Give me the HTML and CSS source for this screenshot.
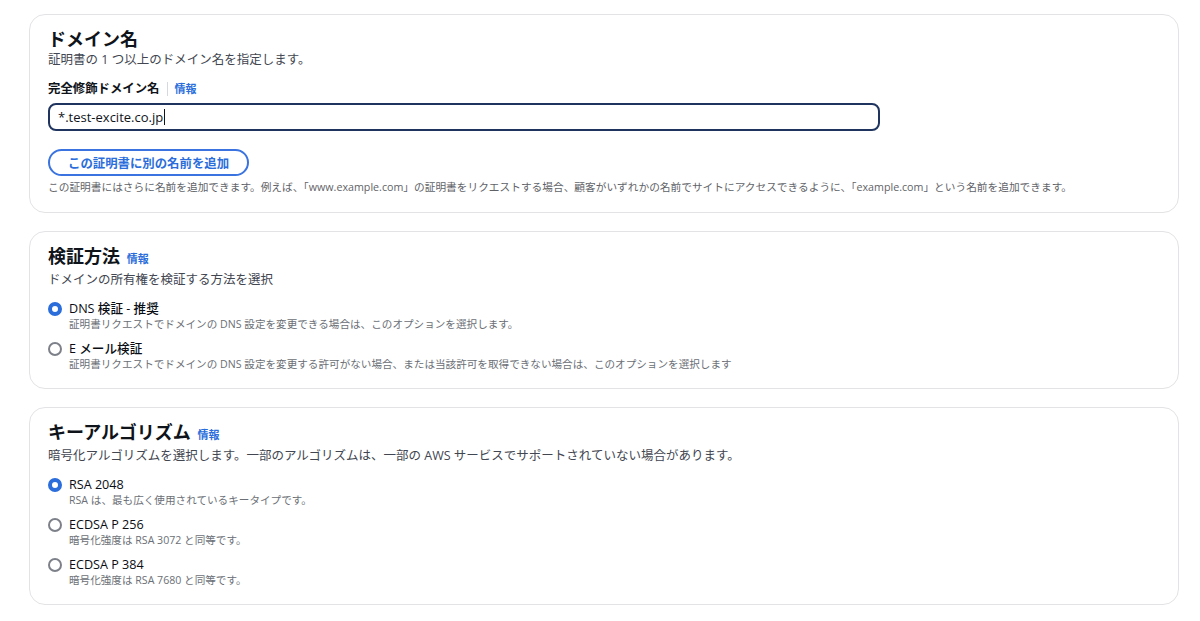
FILE: index.html
```
<!DOCTYPE html>
<html lang="ja">
  <head>
    <meta charset="UTF-8" />
    <meta name="viewport" content="width=device-width, initial-scale=1.0" />
    <title>証明書をリクエスト</title>
    <link rel="stylesheet" href="styles.css">
  </head>
  <body>
    <div class="page">
      <section class="card">
        <h2 class="card-title">ドメイン名</h2>
        <p class="card-desc">証明書の 1 つ以上のドメイン名を指定します。</p>

        <div class="field-label">
          <span>完全修飾ドメイン名</span>
          <a class="info info-divided" href="#">情報</a>
        </div>
        <div class="input-box">*.test-excite.co.jp<span class="caret"></span></div>

        <button class="add-button" type="button">この証明書に別の名前を追加</button>
        <p class="hint">この証明書にはさらに名前を追加できます。例えば、「www.example.com」の証明書をリクエストする場合、顧客がいずれかの名前でサイトにアクセスできるように、「example.com」という名前を追加できます。</p>
      </section>

      <section class="card">
        <h2 class="card-title">検証方法 <a class="info" href="#">情報</a></h2>
        <p class="card-desc">ドメインの所有権を検証する方法を選択</p>

        <div class="radio-group">
          <label class="radio">
            <span class="radio-dot checked"></span>
            <span class="radio-text">
              <span class="radio-label">DNS 検証 - 推奨</span>
              <span class="radio-hint">証明書リクエストでドメインの DNS 設定を変更できる場合は、このオプションを選択します。</span>
            </span>
          </label>
          <label class="radio">
            <span class="radio-dot"></span>
            <span class="radio-text">
              <span class="radio-label">E メール検証</span>
              <span class="radio-hint">証明書リクエストでドメインの DNS 設定を変更する許可がない場合、または当該許可を取得できない場合は、このオプションを選択します</span>
            </span>
          </label>
        </div>
      </section>

      <section class="card">
        <h2 class="card-title">キーアルゴリズム <a class="info" href="#">情報</a></h2>
        <p class="card-desc">暗号化アルゴリズムを選択します。一部のアルゴリズムは、一部の AWS サービスでサポートされていない場合があります。</p>

        <div class="radio-group">
          <label class="radio">
            <span class="radio-dot checked"></span>
            <span class="radio-text">
              <span class="radio-label">RSA 2048</span>
              <span class="radio-hint">RSA は、最も広く使用されているキータイプです。</span>
            </span>
          </label>
          <label class="radio">
            <span class="radio-dot"></span>
            <span class="radio-text">
              <span class="radio-label">ECDSA P 256</span>
              <span class="radio-hint">暗号化強度は RSA 3072 と同等です。</span>
            </span>
          </label>
          <label class="radio">
            <span class="radio-dot"></span>
            <span class="radio-text">
              <span class="radio-label">ECDSA P 384</span>
              <span class="radio-hint">暗号化強度は RSA 7680 と同等です。</span>
            </span>
          </label>
        </div>
      </section>
    </div>
  </body>
</html>
```

FILE: styles.css
```
body {
  margin: 0;
  background: #ffffff;
  font-family: "Open Sans", "Noto Sans CJK JP", sans-serif;
  color: #0f141a;
}

.page {
  display: flex;
  flex-direction: column;
  gap: 18px;
  padding: 14px 21px 0 29px;
}

.card {
  border: 1px solid #e3e3e6;
  border-radius: 16px;
  padding: 12px 18px 17px 18px;
}

.card-title {
  margin: 0;
  font-size: 18px;
  line-height: 24px;
  font-weight: 700;
  color: #0f141a;
}

.card-desc {
  margin: 0;
  font-size: 12.5px;
  line-height: 18px;
  color: #424650;
}

.info {
  font-size: 11px;
  font-weight: 700;
  color: #2a6ddb;
  text-decoration: none;
  margin-left: 2px;
}

.field-label {
  display: flex;
  align-items: center;
  margin-top: 11px;
  font-size: 12.4px;
  line-height: 18px;
  font-weight: 700;
}

.info-divided {
  border-left: 1px solid #d5d8dd;
  padding-left: 7px;
  margin-left: 7px;
  line-height: 14px;
}

.input-box {
  margin-top: 5px;
  width: 812px;
  height: 24px;
  border: 2px solid #1f3560;
  border-radius: 8px;
  padding: 0 8px;
  font-size: 13px;
  line-height: 24px;
  color: #0f141a;
}

.caret {
  display: inline-block;
  width: 1px;
  height: 16px;
  background: #0f141a;
  vertical-align: -3px;
  margin-left: 1px;
}

.add-button {
  display: block;
  margin-top: 18px;
  height: 27px;
  padding: 0 18px;
  border: 2px solid #3b74e0;
  border-radius: 20px;
  background: #ffffff;
  color: #2a6ddb;
  font-family: "Open Sans", "Noto Sans CJK JP", sans-serif;
  font-size: 12.4px;
  font-weight: 700;
  cursor: pointer;
}

.hint {
  margin: 3px 0 0 0;
  font-size: 10.7px;
  line-height: 16px;
  color: #5f6368;
}

.radio-group {
  display: flex;
  flex-direction: column;
  gap: 9px;
  margin-top: 11px;
}

.radio {
  display: flex;
  align-items: flex-start;
  gap: 7px;
}

.radio-dot {
  box-sizing: border-box;
  width: 14px;
  height: 14px;
  margin-top: 2px;
  border: 2px solid #7d8089;
  border-radius: 50%;
  background: #ffffff;
  flex-shrink: 0;
}

.radio-dot.checked {
  border: 4px solid #2a6ddb;
}

.radio-text {
  display: flex;
  flex-direction: column;
}

.radio-label {
  font-size: 12.6px;
  line-height: 17px;
  font-weight: 500;
  color: #0a0e14;
}

.radio-hint {
  font-size: 10.6px;
  line-height: 14px;
  color: #6b6f76;
}
```
